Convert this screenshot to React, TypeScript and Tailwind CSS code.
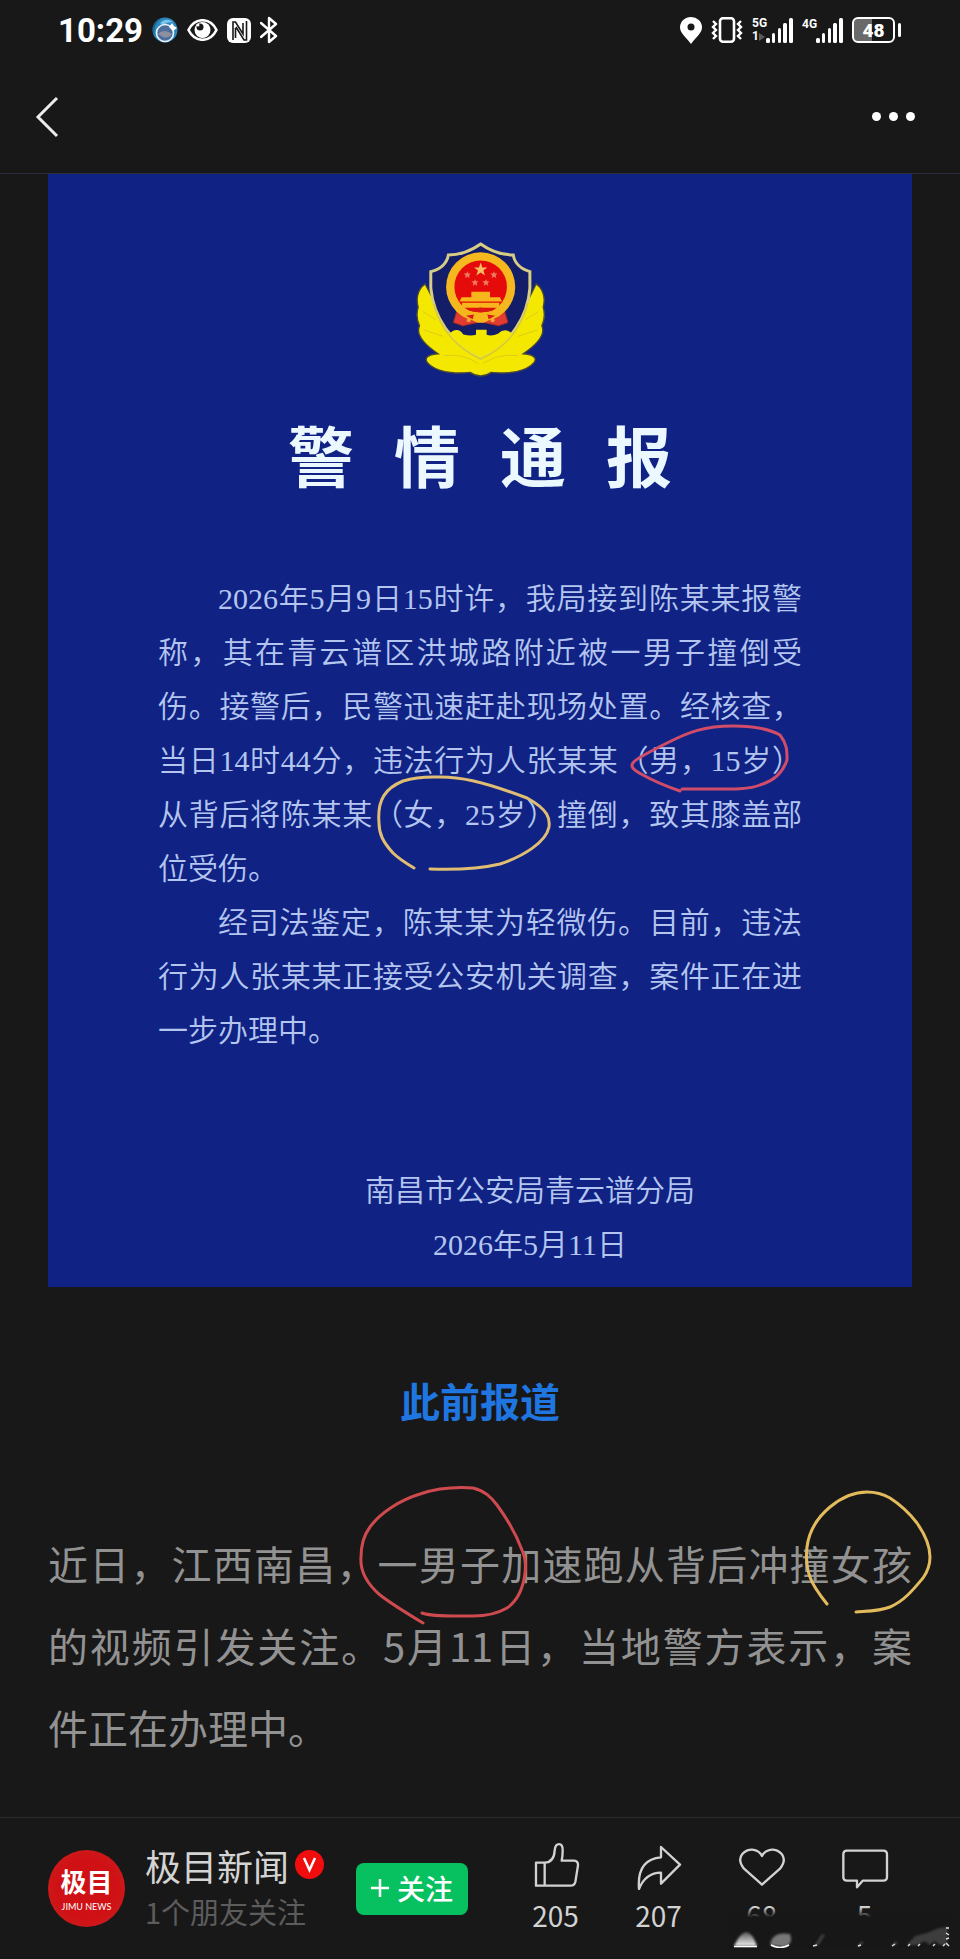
import type { ReactNode } from "react";

const NOTICE_PARAGRAPHS = [
    "2026年5月9日15时许，我局接到陈某某报警称，其在青云谱区洪城路附近被一男子撞倒受伤。接警后，民警迅速赶赴现场处置。经核查，当日14时44分，违法行为人张某某（男，15岁）从背后将陈某某（女，25岁）撞倒，致其膝盖部位受伤。",
    "经司法鉴定，陈某某为轻微伤。目前，违法行为人张某某正接受公安机关调查，案件正在进一步办理中。",
];

const ACTIONS = [
    {
        label: "点赞",
        count: "205",
        viewBox: "156 120 144 144",
        path: "M168 182H194V251H168ZM194 182C214 181 223 168 224 145C226 120 250 120 248 145Q248 163 245 176H282Q295 177 294 190L286 240Q283 251 272 251H194",
    },
    {
        label: "分享",
        count: "207",
        viewBox: "465 120 144 144",
        path: "M543 135L600 188L543 245V212Q497 212 477 261Q470 172 543 166Z",
    },
    {
        label: "喜欢",
        count: "68",
        viewBox: "774 120 144 144",
        path: "M846 248L792 200C762 162 800 140 818 143C832 145 841 152 846 162C851 152 860 145 874 143C892 140 930 162 900 200Z",
    },
    {
        label: "评论",
        count: "5",
        viewBox: "1083 120 144 144",
        path: "M1101 146H1210Q1221 146 1221 157V225Q1221 236 1210 236H1148L1131 256V236H1101Q1090 236 1090 225V157Q1090 146 1101 146Z",
    },
];

function SignalBars() {
    return (
        <svg viewBox="0 0 27 25" className="h-[25px] w-[27px]" fill="#fff">
            <rect x="0" y="20" width="4" height="5" rx="1.5" />
            <rect x="6" y="15" width="3" height="10" rx="1.5" />
            <rect x="12" y="10" width="3" height="15" rx="1.5" />
            <rect x="17" y="5" width="4" height="20" rx="1.5" />
            <rect x="23" y="0" width="4" height="25" rx="1.5" />
        </svg>
    );
}

function StatusBar() {
    return (
        <div className="flex h-[60px] items-center justify-between pr-[59px] pl-[58px]">
            <div className="flex items-center gap-[9px]">
                <span className="font-[Roboto,sans-serif] text-[33px] leading-none font-bold text-white">10:29</span>
                <svg viewBox="0 0 26 26" className="h-[26px] w-[26px]">
                    <circle cx="13" cy="13" r="12.5" fill="#2d87bd" />
                    <path d="M3 19A12 12 0 0 1 10 1A15 15 0 0 0 3 19Z" fill="#155b89" />
                    <path d="M8 6Q14 0 21 5Q15 5 11 8Z" fill="#7ac4ea" />
                    <circle cx="13" cy="16" r="8.5" fill="#4e6f9c" stroke="#e8f5fc" strokeWidth="1.6" />
                    <path d="M6 17Q12 11 20 17Q16 22 11 20Z" fill="#8e8f9f" />
                    <path d="M17 10L20 6L22 9L25 11L21 14Z" fill="#fff" />
                </svg>
                <svg viewBox="0 0 31 22" className="h-[22px] w-[31px]">
                    <path d="M1.5 11C8-2 23-2 29.500 11C23 24 8 24 1.500 11Z" fill="none" stroke="#fff" strokeWidth="2.600" strokeLinejoin="round" />
                    <circle cx="15.500" cy="11" r="8" fill="#fff" />
                    <circle cx="13" cy="8" r="3.500" fill="#181818" />
                    <circle cx="11" cy="6" r="1.500" fill="#fff" />
                </svg>
                <svg viewBox="0 0 24 25" className="h-[25px] w-[24px]">
                    <rect width="24" height="25" rx="6" fill="#fff" />
                    <path d="M6 22V4L8.500 4L16 16V5" fill="none" stroke="#181818" strokeWidth="1.600" />
                    <path d="M8.500 10V20M9 9L17 22H19.500V3" fill="none" stroke="#181818" strokeWidth="1.600" />
                </svg>
                <svg viewBox="0 0 18 28" className="h-[28px] w-[18px]">
                    <path d="M1 7L16 20L9 26V2L16 8L1 21" fill="none" stroke="#fff" strokeWidth="2.400" strokeLinejoin="round" strokeLinecap="round" />
                </svg>
            </div>
            <div className="flex items-center gap-[9px]">
                <svg viewBox="0 0 22 27" className="h-[27px] w-[22px]">
                    <path d="M11 27C6 20 0 16 0 10.500A11 10.500 0 0 1 22 10.500C22 16 16 20 11 27Z" fill="#fff" />
                    <circle cx="11" cy="10" r="3.500" fill="#181818" />
                </svg>
                <svg viewBox="0 0 32 26" className="h-[26px] w-[32px]" fill="none" stroke="#fff" strokeWidth="2.400">
                    <rect x="9" y="1.200" width="14" height="23.500" rx="3" strokeWidth="2.600" />
                    <path d="M2 4L5 7L2 10L5 13L2 16L5 19L2 22M30 4L27 7L30 10L27 13L30 16L27 19L30 22" />
                </svg>
                <div className="flex items-end">
                    <div className="flex w-[14px] flex-col font-[Roboto,sans-serif] text-[12px] leading-[13px] font-bold text-white">
                        <span>5G</span>
                        <span className="flex items-center">
                            1
                            <svg viewBox="0 0 6 8" className="h-2 w-1.5" fill="#5a5a5a">
                                <path d="M0 0L6 4L0 8Z" />
                            </svg>
                        </span>
                    </div>
                    <SignalBars />
                </div>
                <div className="flex items-start">
                    <span className="w-[14px] font-[Roboto,sans-serif] text-[12px] leading-[13px] font-bold text-white">4G</span>
                    <SignalBars />
                </div>
                <div className="flex items-center gap-[3px]">
                    <div className="flex h-[26px] w-[43px] items-center justify-center rounded-[6px] border-2 border-white bg-linear-to-r from-[#6a6a6a] from-45% to-[#181818] to-45% font-[Roboto,sans-serif] text-[19px] leading-none font-black text-white">
                        48
                    </div>
                    <div className="h-[14px] w-[3px] rounded-sm bg-white" />
                </div>
            </div>
        </div>
    );
}

function NavBar() {
    return (
        <div className="flex h-[113px] items-center justify-between pr-[45px] pl-[35px]">
            <button aria-label="返回">
                <svg viewBox="0 0 24 42" className="h-[42px] w-[24px]" fill="none" stroke="#ececec" strokeWidth="3">
                    <path d="M22 2L3 21L22 40" />
                </svg>
            </button>
            <button aria-label="更多" className="flex gap-2">
                <span className="h-[9px] w-[9px] rounded-full bg-white" />
                <span className="h-[9px] w-[9px] rounded-full bg-white" />
                <span className="h-[9px] w-[9px] rounded-full bg-white" />
            </button>
        </div>
    );
}

function PoliceEmblem() {
    return (
        <svg viewBox="105 60 390 415" className="h-[138px] w-[130px]">
            {/* Laurel */}
            <g fill="#f5e800" stroke="#4b4a35" strokeWidth="4">
                <path d="M135 192C110 210 108 240 114 262C106 290 112 305 118 318C106 345 130 372 174 402C135 405 128 420 152 438C185 462 240 462 270 458Q302 480 334 458C364 462 419 462 452 438C476 420 469 405 430 402C474 372 498 345 486 318C492 305 498 290 490 262C496 240 494 210 469 192L445 240L400 340H204L160 240Z" />
            </g>
            {/* Shield */}
            <path
                d="M302 72C270 95 235 105 205 105C200 130 180 148 152 155V205C160 290 210 370 302 416C394 370 444 290 450 205V155C424 148 404 130 400 105C370 105 334 95 302 72Z"
                fill="#141d68"
                stroke="#d8ce83"
                strokeWidth="9"
            />
            <path d="M207 342Q232 318 250 344Q272 350 288 345V330H320V345Q336 350 354 342Q376 321 397 342Q360 388 302 414Q244 388 207 342Z" fill="#f5e800" />
            <path d="M232 268L220 308L248 318L302 306L356 318L384 308L372 268Z" fill="#e33a32" stroke="#a52b22" strokeWidth="3" />
            <circle cx="302" cy="201" r="104" fill="#f5b91f" />
            <circle cx="302" cy="201" r="79" fill="#e60b0b" />
            {/* Gate */}
            <path d="M274 216H330V232H360L366 245H238L245 232H274ZM246 249H358V264H246Z" fill="#f7b61b" />
            <path d="M232 264Q302 290 372 264L350 288Q302 320 254 288Z" fill="#f7b61b" />
            <path d="M262 270Q272 260 286 270Q302 256 318 270Q332 260 344 270Q302 286 262 270ZM258 288L282 284L278 298ZM346 288L322 284L326 298Z" fill="#d71a15" />
            <ellipse cx="302" cy="300" rx="22" ry="9" fill="#f7b61b" />
            <circle cx="266" cy="301" r="6" fill="#f2a43b" />
            <circle cx="338" cy="301" r="6" fill="#f2a43b" />
            {/* Stars */}
            <path d="M302 128L307 143H322L310 152L315 167L302 158L289 167L294 152L282 143H297Z" fill="#f7bd64" />
            <g fill="#ee7a62">
                <path d="M262 154L265 161H272L267 167L269 175L262 170L255 175L257 167L251 161H259Z" />
                <path d="M342 154L345 161H352L347 167L349 175L342 170L335 175L337 167L331 161H339Z" />
                <path d="M285 178L288 184H295L290 190L292 198L285 193L278 198L280 190L274 184H282Z" />
                <path d="M318 178L321 184H328L323 190L325 198L318 193L311 198L313 190L307 184H315Z" />
            </g>
            <path d="M160 250C178 320 220 382 302 418C384 382 426 320 444 250" fill="none" stroke="#d9cb22" strokeWidth="4" />
            <path d="M128 275L168 300M130 330L190 350M476 275L436 300M474 330L414 350M190 408Q250 400 295 432M414 408Q354 400 309 432" fill="none" stroke="#dccd18" strokeWidth="3" />
        </svg>
    );
}

function PoliceNotice() {
    return (
        <section className="relative bg-[#102384] pt-[66px] pb-[15px]">
            <div className="flex flex-col items-center">
                <PoliceEmblem />
                <h1 className="mt-[35px] flex gap-10 text-[66px] leading-[80px] font-bold text-[#ecf8ff]">
                    <span>警</span>
                    <span>情</span>
                    <span>通</span>
                    <span>报</span>
                </h1>
            </div>
            <div className="mx-[110px] mt-[79px] text-justify font-['Liberation_Serif','Noto_Sans_CJK_SC',sans-serif] text-[30px] leading-[54px] font-[350] text-[#b4c6f0]">
                {NOTICE_PARAGRAPHS.map((text) => (
                    <p key={text} className="indent-[60px]">
                        {text}
                    </p>
                ))}
            </div>
            <div className="mt-[106px] pl-[100px] text-center font-['Liberation_Serif','Noto_Sans_CJK_SC',sans-serif] text-[30px] leading-[54px] font-[350] text-[#b4c6f0]">
                <p>南昌市公安局青云谱分局</p>
                <p>2026年5月11日</p>
            </div>
            {/* Hand-drawn marks */}
            <svg viewBox="0 0 862 1113" className="pointer-events-none absolute inset-0 h-full w-full" fill="none" strokeWidth="3" strokeLinecap="round">
                <path stroke="#d04c68" d="M631 617Q608 609 594 601C580 594 580 590 590 584C600 578 608 574 618 569C640 558 655 552 684 552C705 552 722 556 731 561C738 570 738 576 738 586C734 598 725 607 711 611C700 616 680 615 633 615" />
                <path stroke="#e0bd72" d="M365 694C355 688 349 684 344 679C334 668 330 660 330 649C328 625 337 614 354 607C370 602 380 603 391 603C410 603 430 606 478 624C500 636 501 645 500 653C497 668 475 682 451 690C430 695 410 696 381 695" />
            </svg>
        </section>
    );
}

function Article() {
    return (
        <section>
            <h2 className="mt-[83px] text-center text-[40px] leading-[60px] font-bold text-[#1f76e0]">此前报道</h2>
            <div className="relative mt-[92px]">
                <p className="text-justify text-[40px] leading-[82px] text-[#929292]">
                    近日，江西南昌，一男子加速跑从背后冲撞女孩的视频引发关注。5月11日，当地警方表示，案件正在办理中。
                </p>
                <svg viewBox="0 -4 864 246" className="pointer-events-none absolute inset-0 h-full w-full overflow-visible" fill="none" strokeWidth="3" strokeLinecap="round">
                    <path stroke="#cf4a4f" d="M375 97C360 88 345 79 332 69C316 55 312 43 313 31C313 19 316 9 322 1C332-13 352-26 372-32C390-38 410-39 425-38C437-35 443-29 449-21C460-6 468 8 474 24C478 33 478 40 477 47C475 64 469 75 459 82C447 89 436 90 425 90C405 90 385 91 374 87" />
                    <path stroke="#e3bb5c" d="M779 78C771 68 765 60 762 51C758 40 758 30 759 21C761 5 770-9 782-19C794-29 807-34 819-34C829-34 835-32 842-28C853-21 862-12 869-3C876 7 882 20 882 31C882 39 880 45 875 52C865 64 856 75 842 81C832 85 822 85 808 86" />
                </svg>
            </div>
        </section>
    );
}

function ActionButton({ label, count, children }: { label: string; count: string; children: ReactNode }) {
    return (
        <button aria-label={label} className="flex w-[103px] flex-col items-center">
            {children}
            <span className="mt-2 mb-1 text-[28px] leading-[34px] text-[#d2d2d2]">{count}</span>
        </button>
    );
}

function Smudge() {
    return (
        <svg viewBox="0 0 221 41" className="pointer-events-none absolute right-[10px] bottom-[11px] h-[41px] w-[221px]">
            <defs>
                <linearGradient id="cover" x1="0" y1="0" x2="0" y2="1">
                    <stop offset="0" stopColor="#171717" stopOpacity="0" />
                    <stop offset="0.250" stopColor="#171717" />
                </linearGradient>
                <linearGradient id="fade" x1="0" y1="0" x2="0" y2="1">
                    <stop offset="0" stopColor="#555" />
                    <stop offset="1" stopColor="#eee" />
                </linearGradient>
                <filter id="soft">
                    <feGaussianBlur stdDeviation="1" />
                </filter>
            </defs>
            <rect width="221" height="41" fill="url(#cover)" />
            <g filter="url(#soft)">
                <path d="M5 39Q12 25 17 25Q23 25 28 39Z" fill="url(#fade)" />
                <path d="M41 38Q43 24 61 27Q65 38 54 40Z" fill="#777" />
                <path d="M85 39L93 27L96 28L89 39ZM178 38L186 29L198 26L210 21L219 20L218 38L211 38L206 34L200 38L196 34L188 38Z" fill="#3d3d3d" />
                <path d="M129 39L134 35ZM163 39L168 35Z" stroke="#777" />
            </g>
            <path d="M5 39.500H28M42 38Q51 43 60 38" fill="none" stroke="#fff" strokeWidth="1.500" />
            <path d="M84 39L88 38M129 39L132 38M163 39L166 37M179 39L181 37M189 39L191 37M204 39L206 37M214 39L216 37M217 21H220M217 26L220 28M217 32L220 31M217 36L220 39" stroke="#ddd" strokeWidth="1.500" />
        </svg>
    );
}

function Footer() {
    return (
        <footer className="relative flex h-[142px] items-center justify-between border-t border-[#2b2b2b] pr-[44px] pl-[48px]">
            <div className="flex items-center">
                <a href="#account" className="flex h-[77px] w-[77px] flex-col items-center justify-center rounded-full bg-[radial-gradient(circle,#cf1115_55%,#c92424)] text-white">
                    <span className="text-[26px] leading-[32px] font-bold">极目</span>
                    <span className="mt-1 font-[Lato,sans-serif] text-[9px] leading-[11px]">JIMU NEWS</span>
                </a>
                <div className="mb-1 ml-5 w-[211px]">
                    <div className="flex items-center gap-1.5">
                        <span className="text-[36px] leading-[48px] text-[#d4d4d4]">极目新闻</span>
                        <svg viewBox="0 0 29 29" className="h-[29px] w-[29px]">
                            <circle cx="14.500" cy="14.500" r="14.500" fill="#f10d0d" />
                            <path d="M9 8L14.500 20L20 8" fill="none" stroke="#fff" strokeWidth="2.500" />
                        </svg>
                    </div>
                    <p className="text-[29px] leading-[44px] text-[#5c5c5c]">1个朋友关注</p>
                </div>
                <button className="flex h-[52px] w-[112px] items-center justify-center gap-2 rounded-lg bg-[#07c160] pb-0.5 text-[28px] leading-none font-medium text-white">
                    <svg viewBox="0 0 18 18" className="h-[18px] w-[18px]" stroke="#fff" strokeWidth="2.500">
                        <path d="M9 0V18M0 9H18" />
                    </svg>
                    关注
                </button>
            </div>
            <div className="flex">
                {ACTIONS.map((action) => (
                    <ActionButton key={action.label} label={action.label} count={action.count}>
                        <svg viewBox={action.viewBox} className="h-12 w-12" fill="none" stroke="#d2d2d2" strokeWidth="7" strokeLinejoin="round">
                            <path d={action.path} />
                        </svg>
                    </ActionButton>
                ))}
            </div>
            <Smudge />
        </footer>
    );
}

export default function App() {
    return (
        <div className="flex min-h-screen flex-col bg-[#181818] font-['Noto_Sans_CJK_SC',sans-serif]" lang="zh-CN">
            <header className="border-b border-[#292d3c]">
                <StatusBar />
                <NavBar />
            </header>
            <main className="flex-1 px-12 pb-[49px]">
                <PoliceNotice />
                <Article />
            </main>
            <Footer />
        </div>
    );
}
